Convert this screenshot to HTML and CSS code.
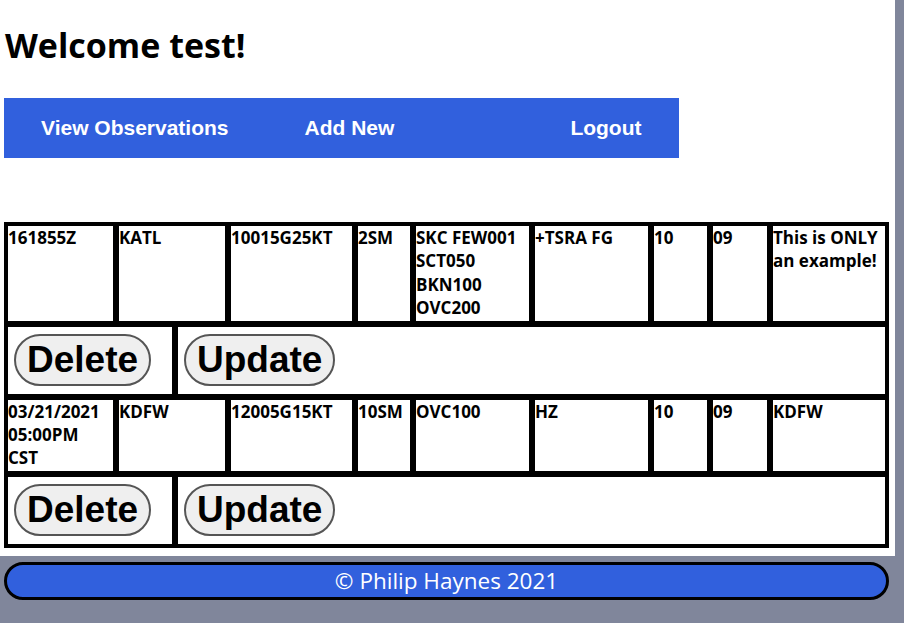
FILE: index.html
```html
<!DOCTYPE html>
<html lang="en">
<head>
<meta charset="utf-8">
<title>Observations</title>
<link rel="stylesheet" href="styles.css">
</head>
<body>
<div class="page">
  <h1 class="welcome">Welcome test!</h1>
  <nav class="nav">
    <a class="nav-link nav-link--first" href="#">View Observations</a>
    <a class="nav-link nav-link--second" href="#">Add New</a>
    <a class="nav-link" href="#">Logout</a>
  </nav>
  <div class="records">
    <div class="data-row">
      <div class="cell">161855Z</div>
      <div class="cell">KATL</div>
      <div class="cell">10015G25KT</div>
      <div class="cell">2SM</div>
      <div class="cell">SKC FEW001 SCT050 BKN100 OVC200</div>
      <div class="cell">+TSRA FG</div>
      <div class="cell">10</div>
      <div class="cell">09</div>
      <div class="cell">This is ONLY an example!</div>
    </div>
    <div class="action-row">
      <div class="cell action-cell"><button class="btn">Delete</button></div>
      <div class="cell action-cell"><button class="btn">Update</button></div>
    </div>
    <div class="data-row">
      <div class="cell">03/21/2021 05:00PM CST</div>
      <div class="cell">KDFW</div>
      <div class="cell">12005G15KT</div>
      <div class="cell">10SM</div>
      <div class="cell">OVC100</div>
      <div class="cell">HZ</div>
      <div class="cell">10</div>
      <div class="cell">09</div>
      <div class="cell">KDFW</div>
    </div>
    <div class="action-row">
      <div class="cell action-cell"><button class="btn">Delete</button></div>
      <div class="cell action-cell"><button class="btn">Update</button></div>
    </div>
  </div>
</div>
<footer class="footer">© Philip Haynes 2021</footer>
</body>
</html>
```

FILE: styles.css
```css
* {
  box-sizing: border-box;
}

html, body {
  margin: 0;
  padding: 0;
}

body {
  background: #80869b;
  font-family: "Open Sans", "DejaVu Sans", sans-serif;
  color: #000;
}

.page {
  width: 895px;
  background: #fff;
  padding: 0 6px 8px 4px;
  overflow: hidden;
}

.welcome {
  margin: 22px 0 30px 1px;
  font-size: 34px;
  font-weight: 700;
  line-height: 46px;
}

.nav {
  width: 675px;
  height: 60px;
  background: #3160dd;
  display: flex;
  align-items: center;
  padding-left: 37px;
  margin-bottom: 64px;
}

.nav-link {
  font-family: "Liberation Sans", Arial, sans-serif;
  font-weight: 700;
  font-size: 21px;
  color: #fff;
  text-decoration: none;
}

.nav-link--first {
  margin-right: 76px;
}

.nav-link--second {
  margin-right: 176px;
}

.records {
  width: 885px;
  border: 1px solid #000;
}

.data-row {
  display: grid;
  grid-template-columns: 111px 112px 127px 58px 119px 119px 59px 60px 118px;
}

.action-row {
  display: grid;
  grid-template-columns: 170px 713px;
}

.cell {
  border: 3px solid #000;
  padding: 0 1px 2px 0;
  font-size: 17px;
  font-weight: 700;
  line-height: 23.25px;
}

.action-cell {
  display: flex;
  align-items: flex-start;
  padding: 1px;
}

.btn {
  margin: 6px 5px 6.5px 5px;
  padding: 3px 11px;
  font-family: "Liberation Sans", Arial, sans-serif;
  font-weight: 700;
  font-size: 37px;
  line-height: 42px;
  color: #000;
  background: #efefef;
  border: 2px solid #555;
  border-radius: 26px;
}

.footer {
  margin: 6px 0 0 4px;
  width: 885px;
  height: 38px;
  background: #3160dd;
  border: 3px solid #000;
  border-radius: 19px;
  color: #fff;
  font-family: "Open Sans", "DejaVu Sans", sans-serif;
  font-size: 22.5px;
  line-height: 31px;
  text-align: center;
}
```
